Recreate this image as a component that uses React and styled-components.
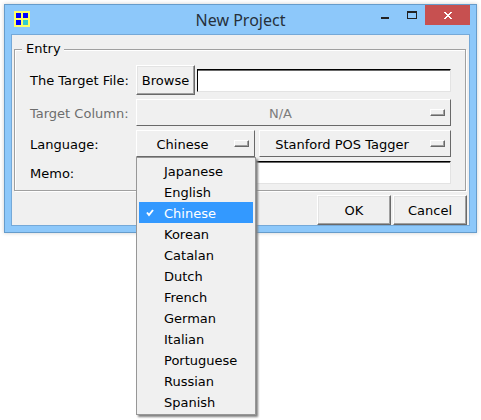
import React, { useState } from "react";
import styled, { createGlobalStyle, css } from "styled-components";

const GlobalStyle = createGlobalStyle`
  *, *::before, *::after { box-sizing: border-box; }
  body {
    margin: 0;
    background: #fff;
    color: #000;
    font: 13px/16px "DejaVu Sans", Verdana, sans-serif;
  }
  button, input, select { font: inherit; color: inherit; margin: 0; border-radius: 0; }
`;

const Desktop = styled.div`
  min-height: 100vh;
  padding: 4px;
`;

const Window = styled.main`
  padding: 0 6px 6px;
  background: #8dc8fa;
  border: 1px solid #669ccb;
  box-shadow: 0 0 4px rgba(0, 0, 0, 0.2);
`;

const TitleBar = styled.header`
  display: grid;
  grid-template-columns: 1fr auto 1fr;
  align-items: start;
  height: 29px;
`;

const AppIcon = styled.svg`
  display: block;
  margin: 6px 0 0 3px;
`;

const Title = styled.h1`
  margin: 5px 0 0;
  font: 16px/20px "Noto Sans", sans-serif;
  color: #26303a;
`;

const WindowButtons = styled.div`
  display: flex;
  justify-content: flex-end;
`;

const WindowButton = styled.button`
  width: ${(p) => (p.$close ? 45 : 27)}px;
  height: 20px;
  padding: 0;
  border: 0;
  background: ${(p) => (p.$close ? "#c75050" : "transparent")};
  svg { display: block; margin: 0 auto; }
`;

const Client = styled.form`
  background: #f0f0f0;
  border: 1px solid #75a9d8;
`;

const Group = styled.fieldset`
  min-width: 0;
  margin: 6px 3px 4px 2px;
  padding: 8px 14px 6px 15px;
  border: 1px solid #a0a0a0;
  box-shadow: 1px 1px #fff, inset 1px 1px #fff;
`;

const Legend = styled.legend`
  margin-left: -8px;
  padding: 0 3px 0 4px;
  background: #f0f0f0;
`;

const Rows = styled.div`
  display: grid;
  gap: 4px;
`;

const Row = styled.div`
  display: grid;
  grid-template-columns: 106px minmax(0, 1fr);
  align-items: center;
`;

const Label = styled.label`
  padding-top: 2px;
  color: ${(p) => (p.$disabled ? "#6d6d6d" : "#000")};
  white-space: nowrap;
`;

const Controls = styled.div`
  display: flex;
  align-items: center;
  gap: ${(p) => p.$gap || 0}px;
`;

const raised = css`
  background: #f0f0f0;
  border: 1px solid;
  border-color: #fff #696969 #696969 #fff;
`;

const PushButton = styled.button`
  ${raised}
  height: 30px;
  width: ${(p) => p.$width}px;
  padding: 2px 0 0;
  box-shadow: inset -1px -1px #a0a0a0, inset 1px 1px #e3e3e3;
`;

const TextBox = styled.input`
  flex: 1;
  min-width: 0;
  width: 100%;
  height: 23px;
  padding: 0 4px;
  background: #fff;
  border: 1px solid;
  border-color: #000 #e3e3e3 #e3e3e3 #000;
  box-shadow: inset 0 1px #696969;
  outline: 0;
`;

const Picker = styled.div`
  position: relative;
  display: flex;
  flex: ${(p) => (p.$width ? `0 0 ${p.$width}px` : "1")};
`;

const Select = styled.select`
  ${raised}
  appearance: none;
  width: 100%;
  height: 27px;
  padding: 2px 26px 0 0;
  text-align: center;
  text-align-last: center;
  outline: 0;
  &:disabled { color: #7d7d7d; opacity: 1; }
`;

const Indicator = styled.span`
  position: absolute;
  right: 6px;
  top: 10px;
  width: 15px;
  height: 7px;
  background: #f0f0f0;
  border: 1px solid;
  border-color: #fff #696969 #696969 #fff;
  box-shadow: inset -1px -1px #a0a0a0;
  pointer-events: none;
`;

const Menu = styled.div`
  position: absolute;
  z-index: 1;
  top: 100%;
  left: 0;
  width: 120px;
  padding: 2px;
  background: #f0f0f0;
  border: 1px solid #979797;
  box-shadow: 2px 2px 2px #808080;
`;

const MenuItem = styled.button`
  display: flex;
  align-items: center;
  width: 100%;
  height: 21px;
  padding: 2px 0 0;
  border: 0;
  text-align: left;
  background: ${(p) => (p.$selected ? "#3399ff" : "transparent")};
  color: ${(p) => (p.$selected ? "#fff" : "#000")};
`;

const CheckSlot = styled.span`
  flex: 0 0 25px;
  padding: 0 0 2px 7px;
  svg { display: block; }
`;

const Footer = styled.div`
  display: flex;
  justify-content: flex-end;
  gap: 2px;
  padding-right: 2px;
`;

const languages = [
  "Japanese", "English", "Chinese", "Korean", "Catalan", "Dutch",
  "French", "German", "Italian", "Portuguese", "Russian", "Spanish",
];

function Check() {
  return (
    <svg width="8" height="8" viewBox="0 0 8 8" aria-hidden="true">
      <path d="M1 3.5 L3 6 L7 1" fill="none" stroke="#fff" strokeWidth="2" />
    </svg>
  );
}

export default function App() {
  const [language, setLanguage] = useState("Chinese");
  const [open, setOpen] = useState(true);

  const choose = (name) => {
    setLanguage(name);
    setOpen(false);
  };

  return (
    <Desktop>
      <GlobalStyle />
      <Window>
        <TitleBar>
          <AppIcon width="16" height="16" viewBox="0 0 16 16" shapeRendering="crispEdges" aria-hidden="true">
            <rect width="16" height="16" fill="#ffff66" />
            <rect x="2" y="2" width="5" height="5" fill="#0000ff" />
            <rect x="9" y="2" width="5" height="5" fill="#0000ff" />
            <rect x="2" y="9" width="5" height="5" fill="#0000ff" />
            <rect x="9" y="9" width="5" height="5" fill="#33cccc" />
          </AppIcon>
          <Title>New Project</Title>
          <WindowButtons>
            <WindowButton type="button" aria-label="Minimize">
              <svg width="27" height="20" shapeRendering="crispEdges">
                <rect x="10" y="12" width="8" height="2" fill="#222" />
              </svg>
            </WindowButton>
            <WindowButton type="button" aria-label="Maximize">
              <svg width="27" height="20" shapeRendering="crispEdges">
                <path d="M9 6h10v8H9zM10 8v5h8V8z" fill="#222" fillRule="evenodd" />
              </svg>
            </WindowButton>
            <WindowButton type="button" $close aria-label="Close">
              <svg width="45" height="20" shapeRendering="crispEdges">
                <path
                  d="M19 7h2v1h1v1h2V8h1V7h2v1h-1v1h-1v1h-1v1h1v1h1v1h1v1h-2v-1h-1v-1h-2v1h-1v1h-2v-1h1v-1h1v-1h1v-1h-1V9h-1V8h-1z"
                  fill="#fff"
                />
              </svg>
            </WindowButton>
          </WindowButtons>
        </TitleBar>
        <Client onSubmit={(e) => e.preventDefault()}>
          <Group>
            <Legend>Entry</Legend>
            <Rows>
              <Row>
                <Label htmlFor="file">The Target File:</Label>
                <Controls $gap={2}>
                  <PushButton type="button" $width={59}>Browse</PushButton>
                  <TextBox id="file" type="text" />
                </Controls>
              </Row>
              <Row>
                <Label htmlFor="column" $disabled>Target Column:</Label>
                <Picker>
                  <Select id="column" disabled>
                    <option>N/A</option>
                  </Select>
                  <Indicator />
                </Picker>
              </Row>
              <Row>
                <Label htmlFor="language">Language:</Label>
                <Controls $gap={4}>
                  <Picker $width={119}>
                    <Select
                      id="language"
                      value={language}
                      onChange={(e) => choose(e.target.value)}
                      onMouseDown={(e) => {
                        e.preventDefault();
                        setOpen(!open);
                      }}
                    >
                      {languages.map((name) => (
                        <option key={name}>{name}</option>
                      ))}
                    </Select>
                    <Indicator />
                    {open && (
                      <Menu role="menu">
                        {languages.map((name) => (
                          <MenuItem
                            key={name}
                            type="button"
                            role="menuitemradio"
                            aria-checked={name === language}
                            $selected={name === language}
                            onClick={() => choose(name)}
                          >
                            <CheckSlot>{name === language && <Check />}</CheckSlot>
                            {name}
                          </MenuItem>
                        ))}
                      </Menu>
                    )}
                  </Picker>
                  <Picker>
                    <Select aria-label="Tagger">
                      <option>Stanford POS Tagger</option>
                    </Select>
                    <Indicator />
                  </Picker>
                </Controls>
              </Row>
              <Row>
                <Label htmlFor="memo">Memo:</Label>
                <TextBox id="memo" type="text" />
              </Row>
            </Rows>
          </Group>
          <Footer>
            <PushButton type="submit" $width={74}>OK</PushButton>
            <PushButton type="button" $width={74}>Cancel</PushButton>
          </Footer>
        </Client>
      </Window>
    </Desktop>
  );
}
